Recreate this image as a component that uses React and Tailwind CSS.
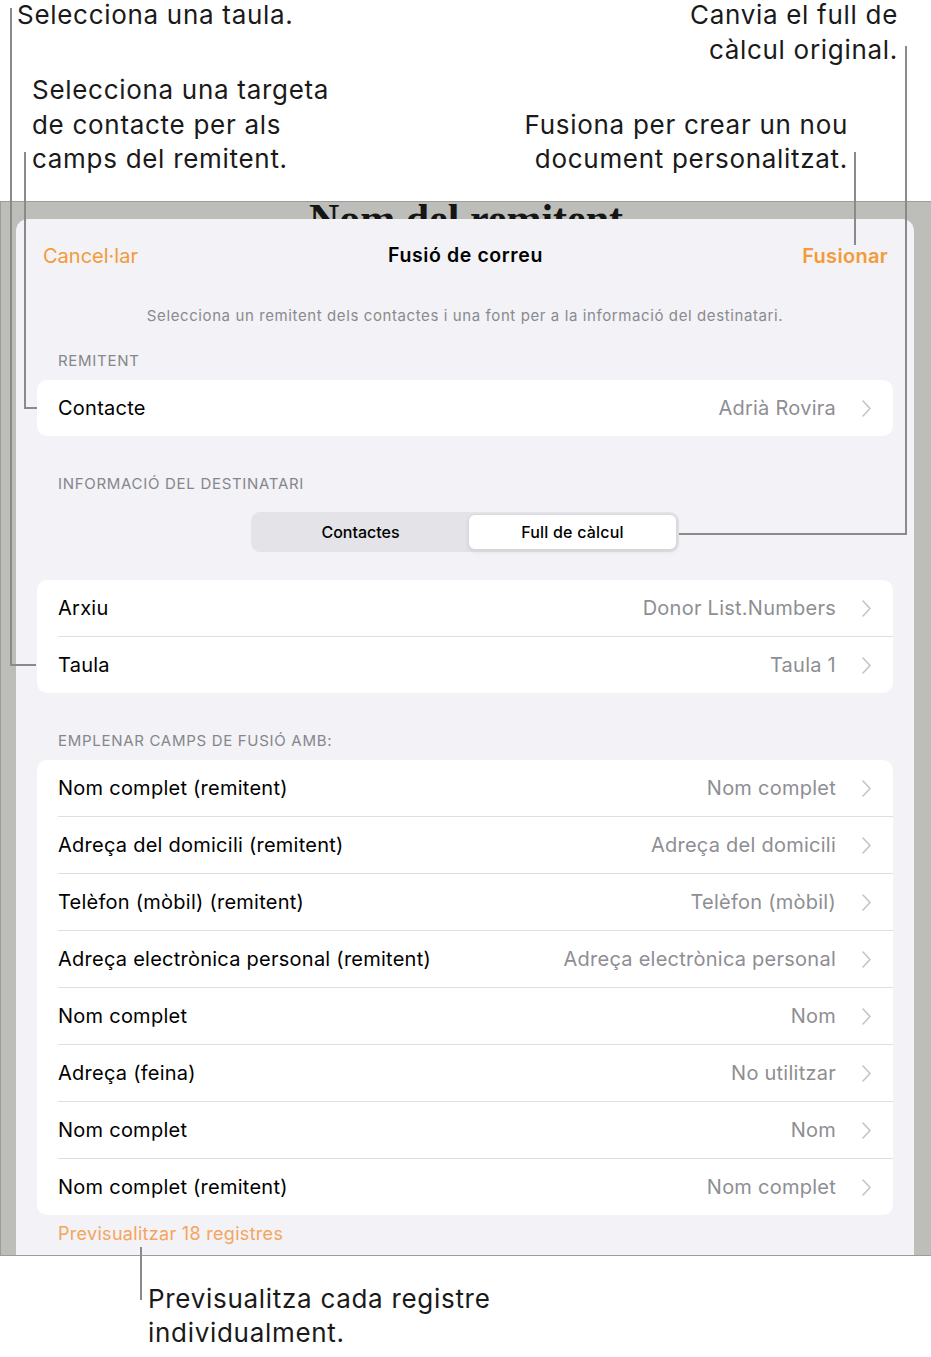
import React from "react";

const Chevron = () => (
  <svg width="11" height="19" viewBox="0 0 11 19" fill="none" className="shrink-0">
    <polyline points="2,2 9,9.5 2,17" stroke="#c4c4c7" strokeWidth="1.6" strokeLinecap="round" strokeLinejoin="round" />
  </svg>
);

const Row = ({ label, value, sep }) => (
  <div className="flex flex-col">
    {sep && <div className="ml-[21px] h-px bg-[#dedee3]" />}
    <div className="flex h-[56px] items-center pl-[21px] pr-[21px] tracking-[0.25px]">
      <span className="flex-1 text-[20px] text-black">{label}</span>
      <span className="text-[20px] text-[#8e8e93]">{value}</span>
      <span className="ml-[25px]"><Chevron /></span>
    </div>
  </div>
);

const SectionLabel = ({ children, className = "" }) => (
  <div className={"pl-[42px] text-[15px] leading-[20px] tracking-[0.7px] text-[#86868b] " + className}>{children}</div>
);

const fields = [
  ["Nom complet (remitent)", "Nom complet"],
  ["Adreça del domicili (remitent)", "Adreça del domicili"],
  ["Telèfon (mòbil) (remitent)", "Telèfon (mòbil)"],
  ["Adreça electrònica personal (remitent)", "Adreça electrònica personal"],
  ["Nom complet", "Nom"],
  ["Adreça (feina)", "No utilitzar"],
  ["Nom complet", "Nom"],
  ["Nom complet (remitent)", "Nom complet"],
];

export default function App() {
  return (
    <div className="relative w-[931px] h-[1357px] overflow-hidden bg-white font-['Inter',sans-serif] text-[#111]">
      {/* Top annotations */}
      <div className="flex h-[201px] flex-col text-[26px] leading-[34.5px] tracking-[0.7px] text-[#1a1a1a]">
        <div className="-mt-[2px] flex justify-between">
          <div className="pl-[17px]">Selecciona una taula.</div>
          <div className="pr-[33px] text-right">
            Canvia el full de
            <br />
            càlcul original.
          </div>
        </div>
        <div className="mt-[6px] flex items-end justify-between">
          <div className="pl-[32px]">
            Selecciona una targeta
            <br />
            de contacte per als
            <br />
            camps del remitent.
          </div>
          <div className="pr-[83px] text-right">
            Fusiona per crear un nou
            <br />
            document personalitzat.
          </div>
        </div>
      </div>

      {/* Screenshot frame */}
      <div className="flex h-[1055px] flex-col border-t border-b border-l border-[#9c9d9a] bg-[#bdbeba]">
        <div className="h-[17px] overflow-hidden text-center">
          <div className="-mt-[4px] font-['Liberation_Serif',serif] text-[42px] font-bold leading-[42px] text-[#151515]">
            Nom del remitent
          </div>
        </div>
        <div className="ml-[15px] mr-[17px] flex flex-1 flex-col rounded-t-[12px] bg-[#f2f2f7]">
          {/* header */}
          <div className="flex h-[73px] items-center justify-between pl-[27px] pr-[26px]">
            <span className="w-[120px] text-[20px] text-[#f29b38]">Cancel·lar</span>
            <span className="text-[19.5px] font-semibold tracking-[0.6px] text-black">Fusió de correu</span>
            <span className="w-[120px] text-right text-[20px] font-semibold tracking-[0.3px] text-[#f29b38]">Fusionar</span>
          </div>
          <div className="mt-[14px] text-center text-[15px] leading-[20px] tracking-[0.6px] text-[#8a8a8e]">
            Selecciona un remitent dels contactes i una font per a la informació del destinatari.
          </div>

          <SectionLabel className="mt-[25px]">REMITENT</SectionLabel>
          <div className="mx-[21px] mt-[9px] rounded-[10px] bg-white">
            <Row label="Contacte" value="Adrià Rovira" />
          </div>

          <SectionLabel className="mt-[38px]">INFORMACIÓ DEL DESTINATARI</SectionLabel>
          <div className="mt-[18px] flex justify-center">
            <div className="flex h-[40px] w-[428px] rounded-[9px] bg-[#e3e3e8] p-[2px]">
              <div className="flex w-[215px] items-center justify-center text-[16px] font-medium text-black">Contactes</div>
              <div className="flex flex-1 items-center justify-center rounded-[7px] border border-[#d8d8dc] bg-white text-[16px] font-medium tracking-[0.2px] text-black shadow-[0_2px_4px_rgba(0,0,0,0.08)]">
                Full de càlcul
              </div>
            </div>
          </div>

          <div className="mx-[21px] mt-[28px] rounded-[10px] bg-white">
            <Row label="Arxiu" value="Donor List.Numbers" />
            <Row label="Taula" value="Taula 1" sep />
          </div>

          <SectionLabel className="mt-[38px]">EMPLENAR CAMPS DE FUSIÓ AMB:</SectionLabel>
          <div className="mx-[21px] mt-[9px] rounded-[10px] bg-white">
            {fields.map(([l, v], i) => (
              <Row key={i} label={l} value={v} sep={i > 0} />
            ))}
          </div>

          <div className="mt-[9px] pl-[42px] text-[18px] leading-[20px] tracking-[0.3px] text-[#f5a55a]">Previsualitzar 18 registres</div>
        </div>
      </div>

      {/* Bottom annotation */}
      <div className="mt-[26px] pl-[148px] text-[26px] leading-[34px] tracking-[0.7px] text-[#1a1a1a]">
        Previsualitza cada registre
        <br />
        individualment.
      </div>

      {/* Callout lines */}
      <div className="absolute left-[10px] top-[8px] h-[658px] w-[2px] bg-[#8a8a8a]" />
      <div className="absolute left-[10px] top-[664px] h-[2px] w-[26px] bg-[#8a8a8a]" />

      <div className="absolute left-[24px] top-[152px] h-[257px] w-[2px] bg-[#8a8a8a]" />
      <div className="absolute left-[24px] top-[407px] h-[2px] w-[13px] bg-[#8a8a8a]" />

      <div className="absolute left-[905px] top-[46px] h-[489px] w-[2px] bg-[#8a8a8a]" />
      <div className="absolute left-[679px] top-[533px] h-[2px] w-[228px] bg-[#8a8a8a]" />

      <div className="absolute left-[854px] top-[152px] h-[93px] w-[2px] bg-[#8a8a8a]" />

      <div className="absolute left-[140px] top-[1247px] h-[53px] w-[2px] bg-[#8a8a8a]" />
    </div>
  );
}
